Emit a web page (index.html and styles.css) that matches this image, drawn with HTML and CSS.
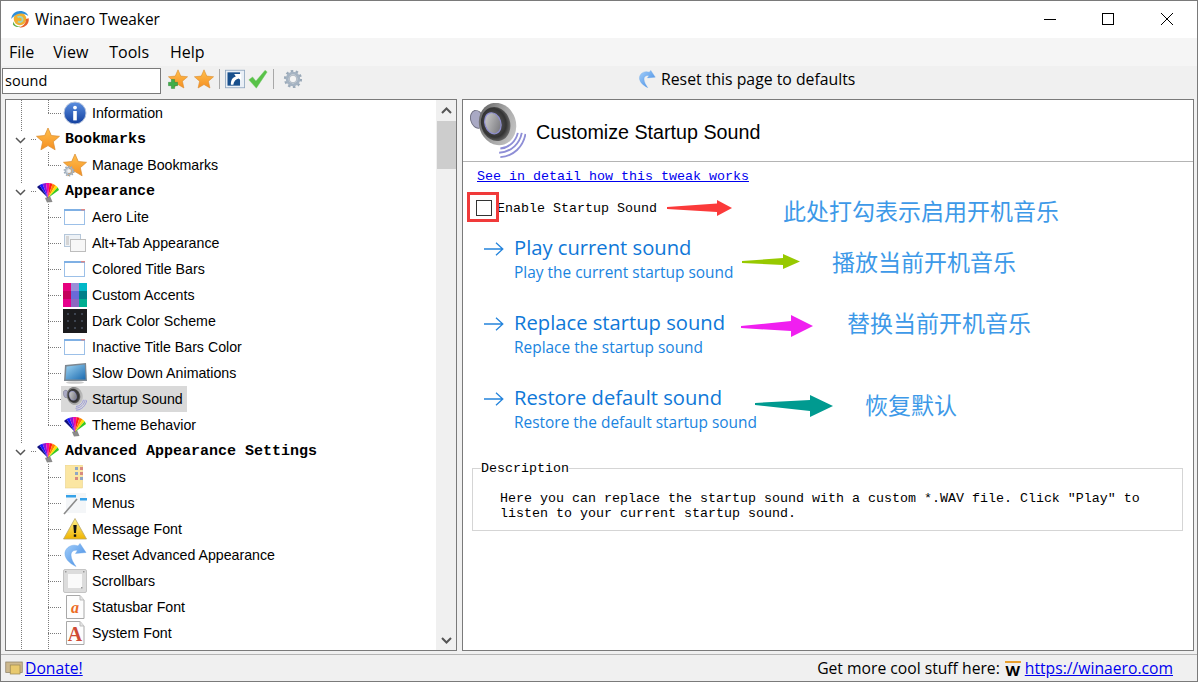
FILE: index.html
```html
<!DOCTYPE html>
<html lang="zh">
<head>
    <meta charset="UTF-8">
    <title>Winaero Tweaker</title>
    <link rel="stylesheet" href="styles.css">
</head>
<body>
    <svg class="sprite" xmlns="http://www.w3.org/2000/svg">
        <defs>
            <linearGradient id="gStar" x1="0" y1="0" x2="0" y2="1"><stop offset="0" stop-color="#ffc04d"/><stop offset="1" stop-color="#f58f22"/></linearGradient>
            <linearGradient id="gInfo" x1="0" y1="0" x2="0" y2="1"><stop offset="0" stop-color="#5b8fe0"/><stop offset="1" stop-color="#123f9e"/></linearGradient>
            <linearGradient id="gReset" x1="0" y1="0" x2="1" y2="1"><stop offset="0" stop-color="#a5d0fa"/><stop offset="1" stop-color="#3c86e2"/></linearGradient>
            <linearGradient id="gRim" x1="0" y1="0" x2="1" y2="1"><stop offset="0" stop-color="#555"/><stop offset=".55" stop-color="#a8a8a8"/><stop offset="1" stop-color="#cfcfcf"/></linearGradient>
            <radialGradient id="gCone" cx=".45" cy=".45" r=".6"><stop offset="0" stop-color="#6a6a6a"/><stop offset=".7" stop-color="#333"/><stop offset="1" stop-color="#777"/></radialGradient>
            <linearGradient id="gDome" x1="0" y1="0" x2="1" y2="1"><stop offset="0" stop-color="#d4d4d4"/><stop offset="1" stop-color="#6e6e74"/></linearGradient>
            <linearGradient id="gSlide" x1="0" y1="0" x2="1" y2="1"><stop offset="0" stop-color="#9fd4f2"/><stop offset="1" stop-color="#1b6bb0"/></linearGradient>
            <linearGradient id="gWarn" x1="0" y1="0" x2="0" y2="1"><stop offset="0" stop-color="#fff08a"/><stop offset="1" stop-color="#f0b400"/></linearGradient>
        </defs>
        <symbol id="i-star" viewBox="0 0 24 24"><polygon points="12,1 15.3,8.5 23.5,9.3 17.3,14.7 19.1,22.8 12,18.6 4.9,22.8 6.7,14.7 .5,9.3 8.7,8.5" fill="url(#gStar)" stroke="#d98a2c" stroke-width=".7"/></symbol>
        <symbol id="i-gear" viewBox="0 0 24 24"><circle cx="12" cy="12" r="9.4" fill="none" stroke="#9aa9b8" stroke-width="3" stroke-dasharray="3 2.9"/><circle cx="12" cy="12" r="7" fill="none" stroke="#a5b3c2" stroke-width="3.4"/><circle cx="12" cy="12" r="4.6" fill="#f4f4f4" stroke="#8796a6" stroke-width=".8"/></symbol>
        <symbol id="i-info" viewBox="0 0 24 24"><circle cx="12" cy="12" r="11" fill="url(#gInfo)" stroke="#b9c6dd" stroke-width="1"/><circle cx="12" cy="6.6" r="1.9" fill="#fff"/><rect x="10.2" y="10" width="3.6" height="9.4" fill="#fff"/></symbol>
        <symbol id="i-fan" viewBox="0 0 24 24">
            <polygon points="9,19 14,17 16.500,23 11,23.500" fill="#8a8a8a"/>
            <polygon points="12,19 1,8 3.500,6" fill="#101080"/>
            <polygon points="12,19 3.500,6 6.500,4.700" fill="#1a1aff"/>
            <polygon points="12,19 6.500,4.700 10,4" fill="#8a14d8"/>
            <polygon points="12,19 10,4 13.500,4" fill="#f00aa0"/>
            <polygon points="12,19 13.500,4 16.500,4.800" fill="#ff1c1c"/>
            <polygon points="12,19 16.500,4.800 19.500,6.300" fill="#ff8200"/>
            <polygon points="12,19 19.500,6.300 21.700,8.200" fill="#ffe000"/>
            <polygon points="12,19 21.700,8.200 23,11" fill="#38c820"/>
        </symbol>
        <symbol id="i-window" viewBox="0 0 24 24"><rect x="1.5" y="4.5" width="20" height="15" fill="#fff" stroke="#9cc0e8"/><rect x="1" y="4" width="21" height="2" fill="#7fb0e4"/><rect x="18" y="4" width="4" height="1.4" fill="#d88"/></symbol>
        <symbol id="i-alttab" viewBox="0 0 24 24"><rect x="1.5" y="3.5" width="16" height="12" fill="#eef2f6" stroke="#b5c7da"/><rect x="3" y="5" width="3" height="9" fill="#d5d5d5"/><rect x="7.5" y="8.5" width="15" height="12" fill="#f7f7f7" stroke="#bdbdbd"/></symbol>
        <symbol id="i-accents" viewBox="0 0 24 24">
            <rect width="8" height="8" fill="#e6007e"/><rect x="8" width="8" height="8" fill="#9a8ed8"/><rect x="16" width="8" height="8" fill="#00b8c8"/>
            <rect y="8" width="8" height="8" fill="#c4005c"/><rect x="8" y="8" width="8" height="8" fill="#6a6ad8"/><rect x="16" y="8" width="8" height="8" fill="#00808a"/>
            <rect y="16" width="8" height="8" fill="#e6008c"/><rect x="8" y="16" width="8" height="8" fill="#8c68c0"/><rect x="16" y="16" width="8" height="8" fill="#00ae90"/>
        </symbol>
        <symbol id="i-dark" viewBox="0 0 24 24"><rect width="24" height="24" fill="#1b1b1d"/><g fill="#3d4450"><rect x="4" y="4" width="2" height="2"/><rect x="11" y="4" width="2" height="2"/><rect x="18" y="4" width="2" height="2"/><rect x="4" y="11" width="2" height="2"/><rect x="11" y="11" width="2" height="2"/><rect x="18" y="11" width="2" height="2"/><rect x="4" y="18" width="2" height="2"/><rect x="11" y="18" width="2" height="2"/><rect x="18" y="18" width="2" height="2"/></g></symbol>
        <symbol id="i-slide" viewBox="0 0 24 24"><polygon points="2,4 23,2 24,20 1,20" fill="#7d8790"/><polygon points="3.5,5.5 21.8,3.6 22.6,18.4 2.6,18.4" fill="url(#gSlide)"/><ellipse cx="12" cy="21.5" rx="9" ry="1.3" fill="#ccc"/></symbol>
        <symbol id="i-speaker" viewBox="0 0 24 24">
            <ellipse cx="3" cy="7" rx="2.700" ry="3.900" transform="rotate(-15 3 7)" fill="#a9a9c4" stroke="#6f6f80" stroke-width=".4"/>
            <ellipse cx="11.800" cy="9" rx="7.900" ry="9.200" transform="rotate(-18 11.800 9)" fill="url(#gRim)"/>
            <ellipse cx="11" cy="9" rx="6.200" ry="7.400" transform="rotate(-18 11 9)" fill="url(#gCone)"/>
            <ellipse cx="9.800" cy="8.700" rx="3.400" ry="4.600" transform="rotate(-18 9.800 8.700)" fill="url(#gDome)" stroke="#8f8fd0" stroke-width=".5"/>
            <path d="M13 19.500C17 19.200 19.700 16.200 20.500 12.800M12.500 21.300C18 21 21.300 17.200 22.200 12.800M13 23.200C18.700 22.900 22.800 18.700 23.800 13.200" fill="none" stroke="#8e8ed6" stroke-width=".8"/>
        </symbol>
        <symbol id="i-icons" viewBox="0 0 24 24"><rect x="2.500" y="0" width="17" height="23" fill="#fbe6a2" stroke="#e6cc80" stroke-width=".5"/><g fill="#8fa6c4"><rect x="12" y="2" width="3" height="3"/><rect x="12" y="7" width="3" height="3"/><rect x="17" y="12" width="3" height="3"/></g><g fill="#d88a80"><rect x="17" y="2" width="3" height="3"/><rect x="17" y="7" width="3" height="3"/><rect x="12" y="12" width="3" height="3"/></g></symbol>
        <symbol id="i-menus" viewBox="0 0 24 24"><rect x="3" y="2" width="20" height="20" fill="#f4f6f8"/><rect x="3" y="4" width="10" height="2.500" fill="#36a2e8"/><rect x="17" y="7" width="7" height="2.500" fill="#36a2e8"/><path d="M1 23L14 8" stroke="#8b8b8b" stroke-width="1.600"/></symbol>
        <symbol id="i-warn" viewBox="0 0 24 24"><polygon points="12,1.500 23.500,22 .5,22" fill="url(#gWarn)" stroke="#b9a66a" stroke-width=".8"/><polygon points="10.300,8 13.700,8 13,16 11,16" fill="#111"/><rect x="10.800" y="17.400" width="2.400" height="2.400" fill="#111"/></symbol>
        <symbol id="i-reset" viewBox="0 0 24 24"><path d="M13 23.500C3 19-.5 11 3.500 6 6.500 2 11.500 1.500 15 3L17 .5 23 9.500 12.500 10.500 14.500 7.500C11 6.500 8 8.500 8 12 8 16 10.500 20 13 23.500z" fill="url(#gReset)" stroke="#5f9fe6" stroke-width=".4"/></symbol>
        <symbol id="i-scroll" viewBox="0 0 24 24"><rect x=".5" y=".5" width="23" height="23" rx="1.500" fill="#dcdcdc" stroke="#c4c4c4"/><rect x="5" y="5" width="14" height="14" fill="#fafafa"/><g fill="#9a9a9a"><rect x="2" y="2" width="1.500" height="1.500"/><rect x="20" y="2" width="1.500" height="1.500"/><rect x="18" y="18" width="1.500" height="1.500"/></g></symbol>
        <symbol id="i-doc" viewBox="0 0 24 24"><path d="M3.500 .5H17L21 5V23.500H3.500z" fill="#fdfdfd" stroke="#a8a8a8"/><path d="M17 .5V5H21" fill="#e4e4e4" stroke="#bdbdbd"/></symbol>
        <symbol id="i-money" viewBox="0 0 24 24"><rect x="1" y="4" width="22" height="14" fill="#cdb98e" stroke="#8d8268"/><rect x="7" y="8" width="13" height="12" fill="#e8c96e" stroke="#9c8a55"/></symbol>
        <symbol id="i-link" viewBox="0 0 24 24"><rect x=".5" y="1.500" width="23" height="21" fill="#e9eff6" stroke="#8fa6bf"/><rect x="3" y="4" width="15" height="16" fill="#184f8c"/><path d="M7 19C7 13 9 10 13 9L11 6H19.500V14L16.500 11.500C13 12 10.500 15 10 19z" fill="#fff"/></symbol>
        <symbol id="i-check" viewBox="0 0 24 24"><path d="M1 13l4.500-3.500 4 5L20.500 1.500 23 3.500 10 23z" fill="#58c248" stroke="#7ac96e" stroke-width=".5"/></symbol>
        <symbol id="i-plus" viewBox="0 0 24 24"><path d="M8 1h8v7h7v8h-7v7H8v-7H1V8h7z" fill="#3fae49" stroke="#2a7c33"/></symbol>
        <symbol id="i-arrow" viewBox="0 0 20 14"><path d="M0 7H18.500M12 .8L18.800 7 12 13.200" fill="none" stroke="#2484dc" stroke-width="1.300"/></symbol>
    </svg>

    <div class="window">
        <header class="titlebar">
            <svg class="app-icon" viewBox="0 0 24 24">
                <circle cx="12" cy="12" r="7.500" fill="#f0b030"/>
                <path d="M1.500 12C2 5 8 1.500 14 2.500c4 .7 7 3 8 6C18 5 12 4.500 8 6.500 5 8 3 10 1.500 12z" fill="#2f8fd8"/>
                <path d="M22.500 11c.5 4-1 8-5 10-2 1-5 1.500-7 1 5-1 9-5 8.500-10z" fill="#e8632c"/>
                <path d="M4 15c1 4 5 6.500 9 6-3 1.500-7 .5-9.500-2.500z" fill="#62b04a"/>
                <path d="M9 10c3-2 7 0 6 3.500-.7 2-3.500 3-5.500 1.500" fill="none" stroke="#9fd7c0" stroke-width="2.200"/>
            </svg>
            <span class="app-name">Winaero Tweaker</span>
            <div class="controls">
                <button class="ctl"><svg width="14" height="14"><path d="M1 6.500H13" stroke="#000"/></svg></button>
                <button class="ctl"><svg width="14" height="14"><rect x="1.500" y=".5" width="11" height="11" fill="none" stroke="#000"/></svg></button>
                <button class="ctl"><svg width="14" height="14"><path d="M1 0L13 12M13 0L1 12" stroke="#000"/></svg></button>
            </div>
        </header>

        <nav class="menubar">
            <span class="menu">File</span>
            <span class="menu">View</span>
            <span class="menu">Tools</span>
            <span class="menu">Help</span>
        </nav>

        <div class="toolbar">
            <input class="search" type="text" value="sound">
            <div class="tools">
                <span class="tool"><svg class="ic20"><use href="#i-star"/></svg><svg class="ic-plus"><use href="#i-plus"/></svg></span>
                <svg class="ic20 star2"><use href="#i-star"/></svg>
                <span class="sep"></span>
                <svg class="ic20"><use href="#i-link"/></svg>
                <svg class="ic20"><use href="#i-check"/></svg>
                <span class="sep"></span>
                <svg class="ic20 gear"><use href="#i-gear"/></svg>
            </div>
            <div class="reset-page">
                <svg class="ic18"><use href="#i-reset"/></svg>
                <span>Reset this page to defaults</span>
            </div>
        </div>

        <main class="main">
            <section class="tree-panel">
                <div class="tree">
                    <div class="row child last"><span class="item"><svg class="ic24"><use href="#i-info"/></svg>Information</span></div>
                    <div class="row parent"><span class="chev"><svg width="11" height="7"><path d="M1 1L5.500 5.500 10 1" fill="none" stroke="#555" stroke-width="1.500"/></svg></span><svg class="ic24"><use href="#i-star"/></svg><span class="group">Bookmarks</span></div>
                    <div class="row child last"><span class="item"><span class="stack"><svg class="ic24"><use href="#i-star"/></svg><svg class="ic-badge"><use href="#i-gear"/></svg></span>Manage Bookmarks</span></div>
                    <div class="row parent"><span class="chev"><svg width="11" height="7"><path d="M1 1L5.500 5.500 10 1" fill="none" stroke="#555" stroke-width="1.500"/></svg></span><svg class="ic24"><use href="#i-fan"/></svg><span class="group">Appearance</span></div>
                    <div class="row child"><span class="item"><svg class="ic24"><use href="#i-window"/></svg>Aero Lite</span></div>
                    <div class="row child"><span class="item"><svg class="ic24"><use href="#i-alttab"/></svg>Alt+Tab Appearance</span></div>
                    <div class="row child"><span class="item"><svg class="ic24"><use href="#i-window"/></svg>Colored Title Bars</span></div>
                    <div class="row child"><span class="item"><svg class="ic24"><use href="#i-accents"/></svg>Custom Accents</span></div>
                    <div class="row child"><span class="item"><svg class="ic24"><use href="#i-dark"/></svg>Dark Color Scheme</span></div>
                    <div class="row child"><span class="item"><svg class="ic24"><use href="#i-window"/></svg>Inactive Title Bars Color</span></div>
                    <div class="row child"><span class="item"><svg class="ic24"><use href="#i-slide"/></svg>Slow Down Animations</span></div>
                    <div class="row child"><span class="item selected"><svg class="ic24"><use href="#i-speaker"/></svg>Startup Sound</span></div>
                    <div class="row child last"><span class="item"><svg class="ic24"><use href="#i-fan"/></svg>Theme Behavior</span></div>
                    <div class="row parent"><span class="chev"><svg width="11" height="7"><path d="M1 1L5.500 5.500 10 1" fill="none" stroke="#555" stroke-width="1.500"/></svg></span><svg class="ic24"><use href="#i-fan"/></svg><span class="group">Advanced Appearance Settings</span></div>
                    <div class="row child"><span class="item"><svg class="ic24"><use href="#i-icons"/></svg>Icons</span></div>
                    <div class="row child"><span class="item"><svg class="ic24"><use href="#i-menus"/></svg>Menus</span></div>
                    <div class="row child"><span class="item"><svg class="ic24"><use href="#i-warn"/></svg>Message Font</span></div>
                    <div class="row child"><span class="item"><svg class="ic24"><use href="#i-reset"/></svg>Reset Advanced Appearance</span></div>
                    <div class="row child"><span class="item"><svg class="ic24"><use href="#i-scroll"/></svg>Scrollbars</span></div>
                    <div class="row child"><span class="item"><svg class="ic24" viewBox="0 0 24 24"><use href="#i-doc" width="24" height="24"/><text class="doc-a" x="12" y="18">a</text></svg>Statusbar Font</span></div>
                    <div class="row child"><span class="item"><svg class="ic24" viewBox="0 0 24 24"><use href="#i-doc" width="24" height="24"/><text class="doc-b" x="12" y="20">A</text></svg>System Font</span></div>
                    <div class="row child"></div>
                </div>
                <div class="scrollbar">
                    <span class="sb-btn"><svg width="11" height="7"><path d="M1 6L5.500 1.500 10 6" fill="none" stroke="#555" stroke-width="2"/></svg></span>
                    <span class="sb-thumb"></span>
                    <span class="sb-rest"></span>
                    <span class="sb-btn"><svg width="11" height="7"><path d="M1 1L5.500 5.500 10 1" fill="none" stroke="#555" stroke-width="2"/></svg></span>
                </div>
            </section>

            <section class="page">
                <div class="page-head">
                    <svg class="ic-head"><use href="#i-speaker"/></svg>
                    <h1>Customize Startup Sound</h1>
                </div>
                <a class="detail-link" href="#">See in detail how this tweak works</a>
                <label class="check-row"><input type="checkbox"><span>Enable Startup Sound</span></label>

                <div class="cmds">
                    <a class="cmd"><svg class="cmd-arrow"><use href="#i-arrow"/></svg><span class="cmd-text"><b>Play current sound</b><small>Play the current startup sound</small></span></a>
                    <a class="cmd"><svg class="cmd-arrow"><use href="#i-arrow"/></svg><span class="cmd-text"><b>Replace startup sound</b><small>Replace the startup sound</small></span></a>
                    <a class="cmd"><svg class="cmd-arrow"><use href="#i-arrow"/></svg><span class="cmd-text"><b>Restore default sound</b><small>Restore the default startup sound</small></span></a>
                </div>

                <fieldset class="desc">
                    <legend>Description</legend>
                    <p>Here you can replace the startup sound with a custom *.WAV file. Click "Play" to<br>listen to your current startup sound.</p>
                </fieldset>
            </section>
        </main>

        <footer class="statusbar">
            <svg class="ic18"><use href="#i-money"/></svg>
            <a href="#">Donate!</a>
            <span class="status-right">Get more cool stuff here:<span class="w-logo">W</span><a href="#">https://winaero.com</a></span>
        </footer>

        <!-- annotations pasted on top of the screenshot -->
        <span class="mark"></span>
        <svg class="arrows" width="1198" height="682">
            <polygon points="667,207 717,203.500 717,200 732,208 717,216 717,212 667,209" fill="#fb3a3a"/>
            <polygon points="742,261 783,258 783,254 800,261.500 783,269 783,265 742,263" fill="#97c900"/>
            <polygon points="741,326 791,321 791,315 813,326 791,337 791,331 741,328" fill="#f01ff0"/>
            <polygon points="755,403 810,400 810,395 833,406 810,417 810,411 755,405" fill="#009a90"/>
        </svg>
        <span class="note note1">此处打勾表示启用开机音乐</span>
        <span class="note note2">播放当前开机音乐</span>
        <span class="note note3">替换当前开机音乐</span>
        <span class="note note4">恢复默认</span>
    </div>
</body>
</html>
```

FILE: styles.css
```css
:root {
    --dot-v: repeating-linear-gradient(to bottom, #7a7a7a 0 1px, transparent 1px 2px);
    --dot-h: repeating-linear-gradient(to right, #7a7a7a 0 1px, transparent 1px 2px);
}

* {
    box-sizing: border-box;
}

body {
    margin: 0;
    background-color: #fff;
    font-family: "Open Sans", "Liberation Sans", sans-serif;
    color: #000;
}

.sprite {
    display: block;
    width: 0;
    height: 0;
}

.window {
    position: relative;
    width: 1198px;
    height: 682px;
    border: 1px solid #7a7a7a;
    background-color: #f0f0f0;
    display: flex;
    flex-direction: column;
    overflow: hidden;
}

.titlebar {
    height: 37px;
    background-color: #fff;
    display: flex;
    align-items: center;
    padding: 0 0 1px 9px;
}

.app-icon {
    width: 20px;
    height: 20px;
}

.app-name {
    margin-left: 5px;
    font-size: 15.400px;
}

.controls {
    margin-left: auto;
    margin-right: 1px;
    display: flex;
}

.ctl {
    width: 58.500px;
    height: 35px;
    border: none;
    background: none;
    padding: 5px 0 0;
}

.menubar {
    height: 28px;
    background-color: #f5f5f5;
    display: flex;
    align-items: center;
    font-size: 16px;
}

.menu:nth-child(1) { margin-left: 8px; }
.menu:nth-child(2) { margin-left: 19px; }
.menu:nth-child(3) { margin-left: 21px; }
.menu:nth-child(4) { margin-left: 21px; }

.toolbar {
    height: 29px;
    display: flex;
    align-items: center;
    padding-left: 1px;
    font-size: 15.800px;
}

.search {
    width: 159px;
    height: 26px;
    border: 1px solid #7a7a7a;
    padding: 0 2px;
    font: 14.500px "Open Sans", sans-serif;
    color: #000;
}

.tools {
    display: flex;
    align-items: center;
    margin: -3px 0 0 7px;
    width: 136px;
    gap: 3px;
}

.tool {
    position: relative;
    display: block;
    width: 22px;
    height: 20px;
}

.ic-plus {
    position: absolute;
    left: 0;
    bottom: 0;
    width: 10px;
    height: 10px;
}

.ic20 { width: 20px; height: 20px; flex: none; }
.ic18 { width: 18px; height: 18px; flex: none; }
.ic24 { width: 24px; height: 24px; flex: none; }

.star2 { margin-left: 1px; }
.gear { margin-left: 4px; }

.sep {
    width: 1px;
    height: 20px;
    background-color: #a8a8a8;
    margin: 0 2px;
}

.reset-page {
    margin: -4px 0 0 334px;
    display: flex;
    align-items: center;
    gap: 5px;
}

.main {
    flex: 1;
    display: flex;
    gap: 5px;
    padding: 4px 3px 2px 4px;
    min-height: 0;
}

.tree-panel {
    width: 452px;
    height: 552px;
    border: 1px solid #7a7a7a;
    background-color: #fff;
    display: flex;
    overflow: hidden;
}

.tree {
    width: 430px;
    font-family: "Liberation Sans", sans-serif;
    font-size: 14.200px;
}

.row {
    height: 26px;
    flex: none;
    display: flex;
    align-items: center;
    background-repeat: no-repeat;
}

.child {
    padding-left: 55px;
    background-image: var(--dot-v), var(--dot-v), var(--dot-h);
    background-size: 1px 100%, 1px 100%, 14px 1px;
    background-position: 15px 0, 42px 0, 42px 13px;
}

.child.last {
    background-size: 1px 100%, 1px 13px, 14px 1px;
}

.parent {
    padding-left: 9px;
    background-image: var(--dot-v), var(--dot-h);
    background-size: 1px 100%, 6px 1px;
    background-position: 15px 0, 25px 13px;
}

.item {
    display: flex;
    align-items: center;
    gap: 5px;
    height: 26px;
    padding: 0 4px 0 2px;
}

.selected {
    background-color: #d9d9d9;
}

.stack {
    position: relative;
    display: block;
    height: 24px;
}

.ic-badge {
    position: absolute;
    left: 0;
    bottom: 0;
    width: 12px;
    height: 12px;
}

.doc-a {
    font: italic bold 16px "Liberation Serif", serif;
    fill: #ec6a24;
    text-anchor: middle;
}

.doc-b {
    font: bold 20px "Liberation Serif", serif;
    fill: #cf4a34;
    text-anchor: middle;
}

.chev {
    width: 11px;
    height: 15px;
    margin-right: 10px;
    background-color: #fff;
    display: flex;
    align-items: center;
    padding-top: 3px;
}

.group {
    margin-left: 5px;
    font-family: "Liberation Mono", monospace;
    font-weight: bold;
    font-size: 15px;
}

.scrollbar {
    width: 20px;
    background-color: #f0f0f0;
    display: flex;
    flex-direction: column;
    align-items: center;
}

.sb-btn {
    height: 20px;
    display: flex;
    align-items: center;
}

.sb-thumb {
    width: 19px;
    height: 48px;
    background-color: #cdcdcd;
    margin-top: 1px;
}

.sb-rest {
    flex: 1;
}

.page {
    width: 732px;
    height: 552px;
    border: 1px solid #7a7a7a;
    background-color: #fff;
    display: flex;
    flex-direction: column;
}

.page-head {
    height: 62px;
    flex: none;
    border-bottom: 1px solid #b4b4b4;
    display: flex;
    align-items: center;
    padding-left: 7px;
}

.ic-head {
    width: 56px;
    height: 56px;
}

h1 {
    margin: 4px 0 0 10px;
    font: normal 19.700px "Liberation Sans", sans-serif;
}

.detail-link,
.check-row,
.desc {
    font-family: "Liberation Mono", monospace;
    font-size: 13.330px;
}

.detail-link {
    margin: 7px 0 0 14px;
    line-height: 15px;
    color: #0000ee;
    align-self: flex-start;
}

.check-row {
    display: flex;
    align-items: center;
    margin: 15px 0 0 13px;
    height: 18px;
}

.check-row input {
    appearance: none;
    width: 16px;
    height: 16px;
    margin: 0 5px 0 0;
    border: 1px solid #333;
    background-color: #fff;
}

.cmds {
    margin-top: 18px;
    display: flex;
    flex-direction: column;
}

.cmd {
    height: 75px;
    display: flex;
    padding-left: 21px;
    gap: 10px;
    color: #0f78d8;
}

.cmd-arrow {
    width: 20px;
    height: 14px;
    margin-top: 7px;
}

.cmd-text {
    display: flex;
    flex-direction: column;
}

.cmd-text b {
    font-weight: normal;
    font-size: 20.200px;
    line-height: 24px;
}

.cmd-text small {
    margin-top: 2px;
    font-size: 15.450px;
    line-height: 22px;
    color: #1a84e0;
}

.desc {
    margin: 1px 10px 0 9px;
    padding: 0;
    height: 70px;
    border: 1px solid #d5d5d5;
}

.desc legend {
    padding: 0;
    margin-left: 8px;
    line-height: 15px;
}

.desc p {
    margin: 15px 0 0 27px;
    line-height: 15px;
    white-space: nowrap;
}

.statusbar {
    height: 27px;
    border-top: 1px solid #b4b4b4;
    display: flex;
    align-items: center;
    padding: 0 24px 0 4px;
    font-size: 15.700px;
}

.statusbar a {
    color: #0000ee;
    text-decoration: underline;
}

.statusbar > a {
    margin-left: 2px;
}

.status-right {
    margin-left: auto;
    display: flex;
    align-items: center;
}

.w-logo {
    margin: 0 4px 0 5px;
    width: 16px;
    height: 15px;
    line-height: 15px;
    text-align: center;
    font-weight: bold;
    font-size: 15px;
    border-top: 2px solid #e8a030;
}

.mark {
    position: absolute;
    left: 466px;
    top: 191px;
    width: 32px;
    height: 30px;
    border: 3px solid #f03a3a;
}

.arrows {
    position: absolute;
    left: -1px;
    top: -1px;
    pointer-events: none;
}

.note {
    position: absolute;
    font-family: "Noto Sans CJK SC", sans-serif;
    font-size: 23px;
    line-height: 30px;
    color: #3d99e8;
    white-space: nowrap;
}

.note1 { left: 782px; top: 194px; }
.note2 { left: 831px; top: 245px; }
.note3 { left: 846px; top: 306px; }
.note4 { left: 864px; top: 388px; }
```
